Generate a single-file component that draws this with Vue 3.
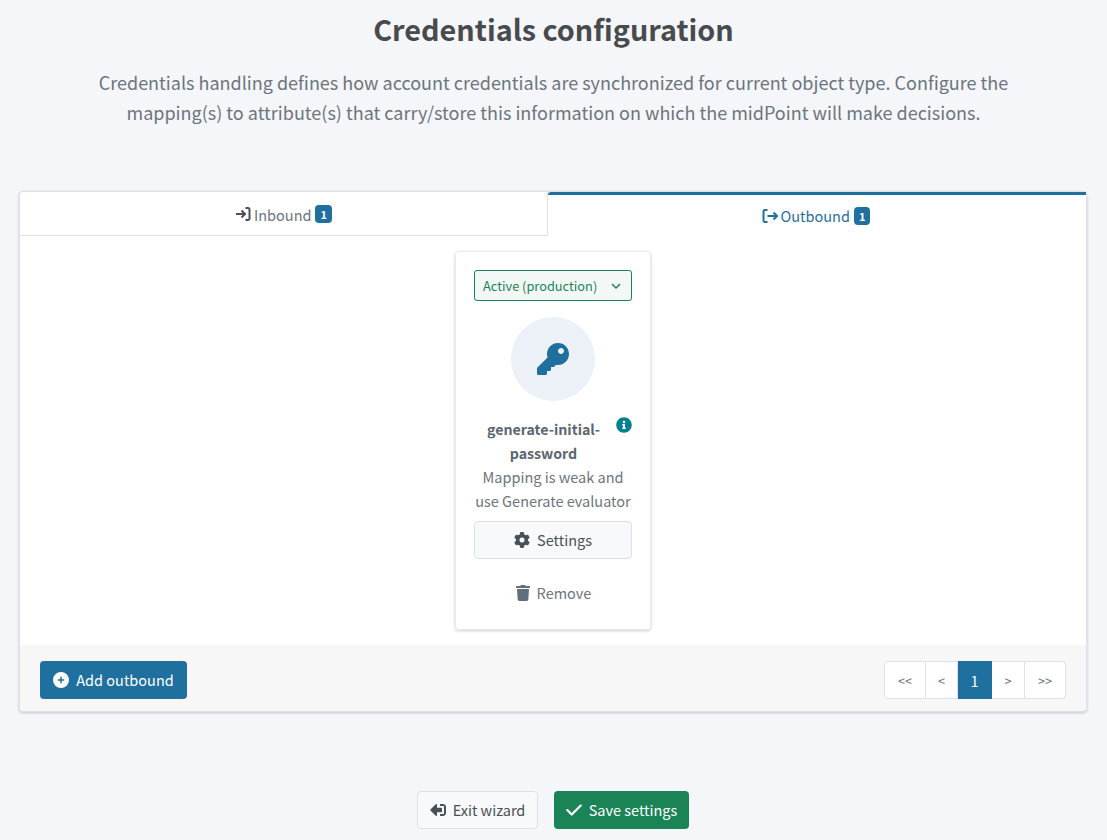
<template>
  <div class="wizard">
    <h1 class="title">Credentials configuration</h1>
    <p class="lead">
      Credentials handling defines how account credentials are synchronized for current object type. Configure the
      mapping(s) to attribute(s) that carry/store this information on which the midPoint will make decisions.
    </p>

    <div class="panel">
      <div class="tabs">
        <a class="tab">
          <svg class="tab-icon" viewBox="0 0 16 16"><path d="M1 8h8.5M6.5 4.5 10 8l-3.500 3.500M10.500 2H13a1.500 1.500 0 0 1 1.500 1.500v9A1.500 1.500 0 0 1 13 14h-2.500" /></svg>
          <span>Inbound</span>
          <span class="badge">1</span>
        </a>
        <a class="tab active">
          <svg class="tab-icon" viewBox="0 0 16 16"><path d="M5.500 2H3a1.500 1.500 0 0 0-1.500 1.500v9A1.500 1.500 0 0 0 3 14h2.500M5.500 8H15M11.500 4.500 15 8l-3.500 3.500" /></svg>
          <span>Outbound</span>
          <span class="badge">1</span>
        </a>
      </div>

      <div class="panel-body">
        <div class="mapping-card">
          <div class="state-select">
            <span>Active (production)</span>
            <svg class="chevron" viewBox="0 0 12 12"><path d="M2 4l4 4 4-4" /></svg>
          </div>
          <div class="key-circle">
            <svg class="key-icon" viewBox="0 0 512 512"><path d="M512 176.001C512 273.203 433.202 352 336 352c-11.220 0-22.190-1.062-32.827-3.069l-24.012 27.014A23.999 23.999 0 0 1 261.223 384H224v40c0 13.255-10.745 24-24 24h-40v40c0 13.255-10.745 24-24 24H24c-13.255 0-24-10.745-24-24v-78.059c0-6.365 2.529-12.470 7.029-16.971l161.802-161.802C163.108 213.814 160 195.271 160 176 160 78.798 238.797.001 335.999 0 433.488-.001 512 78.511 512 176.001zM336 128c0 26.510 21.490 48 48 48s48-21.490 48-48-21.490-48-48-48-48 21.490-48 48z" /></svg>
          </div>
          <div class="name-row">
            <strong class="mapping-name">generate-initial-password</strong>
            <svg class="info-icon" viewBox="0 0 512 512"><path d="M256 8C119 8 8 119.100 8 256c0 137 111 248 248 248s248-111 248-248C504 119.100 393 8 256 8zm0 110c23.200 0 42 18.800 42 42s-18.800 42-42 42-42-18.800-42-42 18.800-42 42-42zm56 254c0 6.600-5.400 12-12 12h-88c-6.600 0-12-5.400-12-12v-24c0-6.600 5.400-12 12-12h12v-64h-12c-6.600 0-12-5.400-12-12v-24c0-6.600 5.400-12 12-12h64c6.600 0 12 5.400 12 12v100h12c6.600 0 12 5.400 12 12v24z" /></svg>
          </div>
          <p class="mapping-desc">Mapping is weak and use Generate evaluator</p>
          <button class="btn settings">
            <svg class="btn-icon" viewBox="0 0 512 512"><path d="M495.900 166.600c3.200 8.700.5 18.400-6.400 24.600l-43.300 39.400c1.100 8.300 1.700 16.800 1.700 25.400s-.6 17.100-1.700 25.400l43.300 39.400c6.900 6.200 9.600 15.900 6.400 24.600c-4.400 11.900-9.700 23.300-15.800 34.300l-4.700 8.100c-6.600 11-14 21.400-22.100 31.200c-5.900 7.200-15.700 9.600-24.500 6.800l-55.700-17.700c-13.400 10.300-28.200 18.900-44 25.400l-12.500 57.100c-2 9.100-9 16.300-18.200 17.800c-13.800 2.300-28 3.500-42.500 3.500s-28.700-1.200-42.500-3.500c-9.200-1.500-16.200-8.700-18.200-17.800l-12.500-57.100c-15.800-6.500-30.600-15.100-44-25.400L83.100 425.900c-8.800 2.800-18.600.3-24.500-6.800c-8.100-9.800-15.500-20.200-22.100-31.200l-4.700-8.100c-6.100-11-11.400-22.400-15.800-34.300c-3.200-8.700-.5-18.400 6.400-24.600l43.300-39.400C64.600 273.100 64 264.600 64 256s.6-17.100 1.700-25.400L22.400 191.200c-6.900-6.200-9.600-15.900-6.400-24.600c4.400-11.900 9.700-23.300 15.800-34.300l4.700-8.100c6.600-11 14-21.400 22.100-31.200c5.900-7.200 15.700-9.600 24.500-6.800l55.700 17.700c13.400-10.300 28.200-18.900 44-25.400l12.500-57.100c2-9.100 9-16.300 18.200-17.800C227.300 1.200 241.500 0 256 0s28.700 1.200 42.500 3.500c9.200 1.500 16.200 8.700 18.200 17.800l12.500 57.100c15.800 6.500 30.600 15.100 44 25.400l55.700-17.700c8.800-2.800 18.600-.3 24.500 6.800c8.100 9.800 15.500 20.200 22.100 31.200l4.700 8.100c6.100 11 11.400 22.400 15.800 34.300zM256 336a80 80 0 1 0 0-160 80 80 0 1 0 0 160z" /></svg>
            Settings
          </button>
          <button class="btn remove">
            <svg class="btn-icon trash" viewBox="0 0 448 512"><path d="M432 32H312l-9.400-18.700A24 24 0 0 0 281.100 0H166.800a23.720 23.720 0 0 0-21.400 13.300L136 32H16A16 16 0 0 0 0 48v32a16 16 0 0 0 16 16h416a16 16 0 0 0 16-16V48a16 16 0 0 0-16-16zM53.200 467a48 48 0 0 0 47.900 45h245.800a48 48 0 0 0 47.900-45L416 128H32z" /></svg>
            Remove
          </button>
        </div>
      </div>

      <div class="panel-footer">
        <button class="btn primary">
          <svg class="btn-icon" viewBox="0 0 512 512"><path d="M256 512A256 256 0 1 0 256 0a256 256 0 1 0 0 512zM232 344V280H168c-13.300 0-24-10.700-24-24s10.700-24 24-24h64V168c0-13.300 10.700-24 24-24s24 10.700 24 24v64h64c13.300 0 24 10.700 24 24s-10.700 24-24 24H280v64c0 13.300-10.700 24-24 24s-24-10.700-24-24z" /></svg>
          Add outbound
        </button>
        <ul class="pagination">
          <li v-for="page in pages" :key="page.label" :class="{ current: page.current }" :style="{ width: page.width + 'px' }">{{ page.label }}</li>
        </ul>
      </div>
    </div>

    <div class="wizard-actions">
      <button class="btn exit">
        <svg class="btn-icon flip" viewBox="0 0 512 512"><path d="M497 273L329 441c-15 15-41 4.500-41-17v-96H152c-13.300 0-24-10.700-24-24v-96c0-13.300 10.700-24 24-24h136V88c0-21.400 25.900-32 41-17l168 168c9.300 9.400 9.300 24.600 0 34zM192 436v-40c0-6.600-5.400-12-12-12H96c-17.700 0-32-14.300-32-32V160c0-17.700 14.300-32 32-32h84c6.600 0 12-5.400 12-12V76c0-6.600-5.400-12-12-12H96c-53 0-96 43-96 96v192c0 53 43 96 96 96h84c6.600 0 12-5.400 12-12z" /></svg>
        Exit wizard
      </button>
      <button class="btn save">
        <svg class="btn-icon check" viewBox="0 0 512 512"><path d="M470.600 105.400c12.500 12.500 12.500 32.800 0 45.300l-256 256c-12.500 12.500-32.800 12.500-45.300 0l-128-128c-12.500-12.500-12.500-32.800 0-45.300s32.800-12.500 45.300 0L192 338.700 425.400 105.400c12.500-12.500 32.800-12.500 45.300 0z" /></svg>
        Save settings
      </button>
    </div>
  </div>
</template>

<script setup>
const pages = [
  { label: '<<', width: 42 },
  { label: '<', width: 32 },
  { label: '1', width: 34, current: true },
  { label: '>', width: 33 },
  { label: '>>', width: 41 }
]
</script>

<style>
body {
  background: #f4f6f9;
}
</style>

<style scoped>
.wizard {
  height: 840px;
  box-sizing: border-box;
  padding: 0 19px;
  overflow: hidden;
  font-family: "Noto Sans CJK SC", "Noto Sans", sans-serif;
  font-size: 14.500px;
  color: #495057;
}

.title {
  margin: 10px 0 0;
  font-size: 28.800px;
  line-height: 38px;
  font-weight: 700;
  text-align: center;
  color: #484b4e;
}

.lead {
  width: 930px;
  margin: 19px auto 0;
  font-size: 18px;
  line-height: 30px;
  text-align: center;
  color: #6c757d;
}

.panel {
  margin-top: 64px;
  width: 1068px;
  box-sizing: border-box;
  border: 1px solid #dee2e6;
  border-radius: 4px;
  background: #fff;
  box-shadow: 0 1px 3px rgba(0, 0, 0, 0.2);
}

.tabs {
  display: flex;
  height: 44px;
}

.tab {
  flex: 1;
  display: flex;
  align-items: center;
  justify-content: center;
  gap: 3px;
  color: #6c757d;
  border-bottom: 1px solid #dee2e6;
  border-right: 1px solid #dee2e6;
}

.tab:first-child {
  flex: 0 0 528px;
  box-sizing: border-box;
  padding-top: 1px;
}

.tab.active {
  color: #1f6f9f;
  border-top: 3px solid #1f6f9f;
  border-bottom: 0;
  border-right: 0;
  border-top-left-radius: 3px;
  padding-right: 2px;
}

.tab-icon {
  width: 16px;
  height: 16px;
  fill: none;
  stroke: #495057;
  stroke-width: 2;
}

.active .tab-icon {
  stroke: #1f6f9f;
}

.badge {
  margin-left: 1px;
  padding: 0 5px;
  height: 18px;
  line-height: 18px;
  font-size: 11px;
  font-weight: 700;
  border-radius: 4px;
  color: #fff;
  background: #1f6f9f;
}

.panel-body {
  display: flex;
  justify-content: center;
  padding: 15px 0;
}

.mapping-card {
  width: 196px;
  height: 379px;
  box-sizing: border-box;
  padding: 18px 18px 0;
  display: flex;
  flex-direction: column;
  align-items: center;
  border: 1px solid #e9ecef;
  border-radius: 4px;
  box-shadow: 0 1px 3px rgba(0, 0, 0, 0.2);
}

.state-select {
  width: 158px;
  height: 31px;
  box-sizing: border-box;
  padding: 0 9px 0 8px;
  flex: none;
  display: flex;
  align-items: center;
  justify-content: space-between;
  font-size: 12.800px;
  color: #1a8457;
  border: 1px solid #1a8457;
  border-radius: 3px;
  background: #f3f8f6;
}

.chevron {
  width: 12px;
  height: 12px;
  fill: none;
  stroke: #1a8457;
  stroke-width: 1.500;
}

.key-circle {
  width: 84px;
  height: 84px;
  margin-top: 16px;
  flex: none;
  display: flex;
  align-items: center;
  justify-content: center;
  border-radius: 50%;
  background: #ebf1f7;
}

.key-icon {
  width: 32px;
  height: 32px;
  fill: #1f6f9f;
}

.name-row {
  position: relative;
  width: 158px;
  box-sizing: border-box;
  padding-right: 19px;
  margin-top: 16px;
  text-align: center;
}

.mapping-name {
  display: block;
  font-size: 14.200px;
  line-height: 24px;
  color: #5c6670;
}

.info-icon {
  position: absolute;
  top: 0;
  right: 0;
  width: 16px;
  height: 16px;
  fill: #028090;
}

.mapping-desc {
  margin: 0;
  line-height: 24px;
  text-align: center;
  color: #6c757d;
}

.btn {
  display: inline-flex;
  align-items: center;
  justify-content: center;
  gap: 7px;
  height: 38px;
  box-sizing: border-box;
  padding: 0 12px;
  font: inherit;
  line-height: 24px;
  white-space: nowrap;
  border: 1px solid transparent;
  border-radius: 4px;
  background: none;
}

.btn-icon {
  width: 16px;
  height: 16px;
  fill: currentColor;
  flex: none;
}

.trash {
  width: 14px;
}

.settings {
  width: 158px;
  margin-top: 8px;
  flex: none;
  color: #495057;
  border-color: #dee2e6;
  background: #f8f9fa;
}

.remove {
  margin-top: 15px;
  margin-left: 1px;
  flex: none;
  color: #6c757d;
}

.remove .btn-icon {
  color: #5f6f80;
}

.panel-footer {
  height: 66px;
  box-sizing: border-box;
  padding: 16px 20px 0;
  display: flex;
  justify-content: space-between;
  align-items: flex-start;
  background: #f7f7f7;
  border-radius: 0 0 4px 4px;
}

.primary {
  width: 147px;
  color: #fff;
  background: #1f6f9f;
}

.pagination {
  display: flex;
  height: 38px;
  margin: 0;
  padding: 0;
  list-style: none;
  font-size: 12.600px;
  color: #6c757d;
}

.pagination li {
  display: flex;
  align-items: center;
  justify-content: center;
  box-sizing: border-box;
  background: #fff;
  border: 1px solid #dee2e6;
  border-left-width: 0;
}

.pagination li:first-child {
  border-left-width: 1px;
  border-radius: 4px 0 0 4px;
}

.pagination li:last-child {
  border-radius: 0 4px 4px 0;
}

.pagination .current {
  font-size: 14.500px;
  color: #fff;
  background: #1f6f9f;
  border-color: #1f6f9f;
}

.wizard-actions {
  margin-top: 79px;
  padding-right: 1px;
  display: flex;
  justify-content: center;
  gap: 16px;
}

.exit {
  width: 121px;
  color: #495057;
  border-color: #dee2e6;
  background: #f8f9fa;
}

.flip {
  transform: scaleX(-1);
}

.check {
  width: 18px;
  height: 18px;
  margin: 0 -1px;
}

.save {
  width: 135px;
  color: #fff;
  background: #1a8457;
}
</style>
